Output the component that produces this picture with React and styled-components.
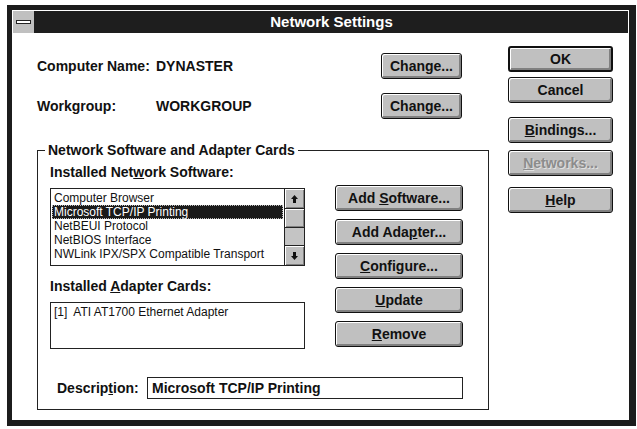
import React from 'react';
import styled, { createGlobalStyle } from 'styled-components';

const GlobalStyle = createGlobalStyle`
  html, body { margin: 0; padding: 0; background: #fff; }
  body { font-family: "Liberation Sans", Arial, sans-serif; color: #111; }
`;

const Window = styled.div`
  box-sizing: border-box;
  margin: 5px 0 0 7px;
  width: 629px;
  height: 421px;
  border: 5px solid #1c1c1c;
  border-right-width: 7px;
  border-bottom-width: 6px;
  padding: 1px;
  background: #fff;
  display: flex;
  flex-direction: column;
`;

const TitleBar = styled.div`
  display: flex;
  height: 22px;
  background: #1e1e1e;
`;

const SysMenu = styled.div`
  width: 21px;
  background: #c0c0c0;
  border-right: 1px solid #1e1e1e;
  display: flex;
  align-items: center;
  justify-content: center;
`;

const SysBar = styled.div`
  width: 13px;
  height: 2px;
  border: 1px solid #222;
  background: #fff;
`;

const Title = styled.div`
  flex: 1;
  text-align: center;
  color: #fff;
  font-weight: bold;
  font-size: 15px;
  line-height: 22px;
`;

const Client = styled.div`
  display: flex;
  padding: 13px 0 0 24px;
`;

const MainColumn = styled.div`
  width: 452px;
  display: flex;
  flex-direction: column;
  padding-top: 6px;
`;

const InfoRow = styled.div`
  display: grid;
  grid-template-columns: 119px 225px 81px;
  align-items: center;
  height: 27px;
  margin-top: ${p => p.$mt || 0}px;
`;

const Label = styled.span`
  font-weight: bold;
  font-size: 14px;
`;

const Button = styled.button`
  box-sizing: border-box;
  width: ${p => p.$w}px;
  height: 26px;
  margin-top: ${p => p.$mt || 0}px;
  padding: 0;
  background: #c0c0c0;
  border: ${p => (p.$default ? 2 : 1)}px solid #111;
  border-radius: 3px;
  box-shadow: inset 1px 1px 0 #fff, inset -2px -2px 0 #808080;
  font-family: "Liberation Sans", Arial, sans-serif;
  font-weight: bold;
  font-size: 14px;
  color: ${p => (p.$disabled ? '#8c8c8c' : '#111')};
  text-shadow: ${p => (p.$disabled ? '1px 1px 0 #e0e0e0' : 'none')};
`;

const GroupBox = styled.fieldset`
  margin: 24px 0 0;
  padding: 6px 12px 10px;
  border: 1px solid #222;
  min-width: 0;
`;

const Legend = styled.legend`
  font-weight: bold;
  font-size: 14px;
  line-height: 15px;
  padding: 0 3px;
  margin-left: -5px;
`;

const GroupBody = styled.div`
  display: flex;
  gap: 30px;
`;

const ListColumn = styled.div`
  width: 255px;
  display: flex;
  flex-direction: column;
`;

const FieldLabel = styled.div`
  font-weight: bold;
  font-size: 14px;
  line-height: 16px;
  margin-top: ${p => p.$mt || 0}px;
  margin-bottom: 8px;
`;

const ListBox = styled.div`
  box-sizing: border-box;
  height: 78px;
  border: 1px solid #222;
  display: flex;
`;

const ListItems = styled.div`
  flex: 1;
  padding: 2px 1px 0;
  min-width: 0;
`;

const ListItem = styled.div`
  box-sizing: border-box;
  height: 14px;
  font-size: 12px;
  line-height: 14px;
  padding-left: 2px;
  white-space: nowrap;
  background: ${p => (p.$selected ? '#1a1a1a' : 'transparent')};
  color: ${p => (p.$selected ? '#fff' : '#111')};
  outline: ${p => (p.$selected ? '1px dotted #bbb' : 'none')};
  outline-offset: -1px;
`;

const ScrollBar = styled.div`
  width: 19px;
  border-left: 1px solid #222;
  background: #c8c8c8;
  display: flex;
  flex-direction: column;
`;

const ScrollPart = styled.div`
  box-sizing: border-box;
  height: ${p => p.$h}px;
  background: #c0c0c0;
  border-top: ${p => (p.$top ? '1px solid #222' : 'none')};
  border-bottom: ${p => (p.$bottom ? '1px solid #222' : 'none')};
  box-shadow: inset 1px 1px 0 #fff, inset -1px -1px 0 #808080;
  display: flex;
  align-items: center;
  justify-content: center;
`;

const Track = styled.div`
  flex: 1;
  background: #c4c4c4;
`;

const AdapterBox = styled.div`
  box-sizing: border-box;
  height: 47px;
  border: 1px solid #222;
  padding: 2px 3px;
  font-size: 12px;
  line-height: 14px;
`;

const ButtonStack = styled.div`
  display: flex;
  flex-direction: column;
  gap: 8px;
  padding-top: 21px;
`;

const DescRow = styled.div`
  display: flex;
  align-items: center;
  margin-top: 28px;
  padding-left: 7px;
`;

const DescLabel = styled(Label)`
  width: 90px;
`;

const DescField = styled.div`
  box-sizing: border-box;
  width: 316px;
  height: 22px;
  border: 1px solid #222;
  padding-left: 4px;
  font-weight: bold;
  font-size: 14px;
  line-height: 20px;
`;

const SideColumn = styled.div`
  width: 105px;
  margin-left: 19px;
  display: flex;
  flex-direction: column;
`;

const Arrow = ({ down }) => (
  <svg width="7" height="8" viewBox="0 0 7 8" style={{ transform: down ? 'rotate(180deg)' : 'none' }}>
    <polygon points="3.5,0 7,4 0,4" fill="#111" />
    <rect x="2" y="4" width="3" height="4" fill="#111" />
  </svg>
);

const software = [
  'Computer Browser',
  'Microsoft TCP/IP Printing',
  'NetBEUI Protocol',
  'NetBIOS Interface',
  'NWLink IPX/SPX Compatible Transport',
];

export default function App() {
  return (
    <>
      <GlobalStyle />
      <Window>
        <TitleBar>
          <SysMenu><SysBar /></SysMenu>
          <Title>Network Settings</Title>
        </TitleBar>
        <Client>
          <MainColumn>
            <InfoRow>
              <Label>Computer Name:</Label>
              <Label>DYNASTER</Label>
              <Button $w={81}>Chan<u>g</u>e...</Button>
            </InfoRow>
            <InfoRow $mt={13}>
              <Label>Workgroup:</Label>
              <Label>WORKGROUP</Label>
              <Button $w={81}>Chan<u>g</u>e...</Button>
            </InfoRow>
            <GroupBox>
              <Legend>Network Software and Adapter Cards</Legend>
              <GroupBody>
                <ListColumn>
                  <FieldLabel>Installed Net<u>w</u>ork Software:</FieldLabel>
                  <ListBox>
                    <ListItems>
                      {software.map((s, i) => (
                        <ListItem key={s} $selected={i === 1}>{s}</ListItem>
                      ))}
                    </ListItems>
                    <ScrollBar>
                      <ScrollPart $h={20} $bottom><Arrow /></ScrollPart>
                      <ScrollPart $h={19} $bottom />
                      <Track />
                      <ScrollPart $h={20} $top><Arrow down /></ScrollPart>
                    </ScrollBar>
                  </ListBox>
                  <FieldLabel $mt={12}>Installed <u>A</u>dapter Cards:</FieldLabel>
                  <AdapterBox>[1]&nbsp; ATI AT1700 Ethernet Adapter</AdapterBox>
                </ListColumn>
                <ButtonStack>
                  <Button $w={128}>Add <u>S</u>oftware...</Button>
                  <Button $w={128}>Add Ada<u>p</u>ter...</Button>
                  <Button $w={128}><u>C</u>onfigure...</Button>
                  <Button $w={128}><u>U</u>pdate</Button>
                  <Button $w={128}><u>R</u>emove</Button>
                </ButtonStack>
              </GroupBody>
              <DescRow>
                <DescLabel>Descrip<u>t</u>ion:</DescLabel>
                <DescField>Microsoft TCP/IP Printing</DescField>
              </DescRow>
            </GroupBox>
          </MainColumn>
          <SideColumn>
            <Button $w={105} $default>OK</Button>
            <Button $w={105} $mt={5}>Cancel</Button>
            <Button $w={105} $mt={14}><u>B</u>indings...</Button>
            <Button $w={105} $mt={7} $disabled><u>N</u>etworks...</Button>
            <Button $w={105} $mt={11}><u>H</u>elp</Button>
          </SideColumn>
        </Client>
      </Window>
    </>
  );
}
